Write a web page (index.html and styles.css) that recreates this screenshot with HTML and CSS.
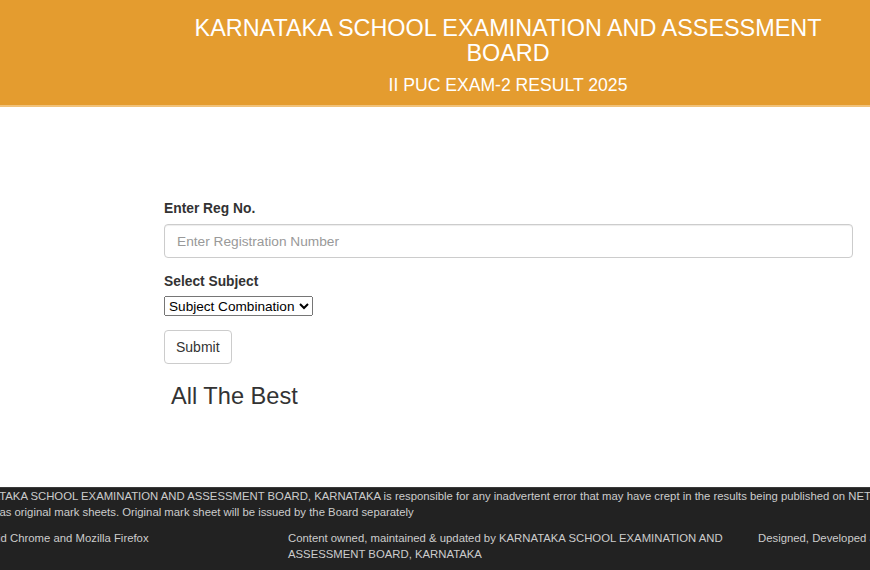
FILE: index.html
```html
<!DOCTYPE html>
<html lang="en">
<head>
<meta charset="utf-8">
<title>KSEAB II PUC Exam-2 Result 2025</title>
<link rel="stylesheet" href="styles.css">
</head>
<body>
<div class="page">
  <header class="site-header">
    <h1 class="title">KARNATAKA SCHOOL EXAMINATION AND ASSESSMENT BOARD</h1>
    <h2 class="subtitle">II PUC EXAM-2 RESULT 2025</h2>
  </header>

  <main class="main">
    <form class="result-form">
      <label class="field-label" for="reg">Enter Reg No.</label>
      <input class="text-input" id="reg" type="text" placeholder="Enter Registration Number">
      <label class="field-label label-subject" for="subj">Select Subject</label>
      <select class="subject-select" id="subj">
        <option>Subject Combination</option>
      </select>
      <div class="actions">
        <button class="btn" type="button">Submit</button>
      </div>
      <h3 class="wish">All The Best</h3>
    </form>
  </main>

  <footer class="site-footer">
    <p class="notice">KARNATAKA SCHOOL EXAMINATION AND ASSESSMENT BOARD, KARNATAKA is responsible for any inadvertent error that may have crept in the results being published on NET. The results published on net are for immediate information to the examinees. These cannot be<br>treated as original mark sheets. Original mark sheet will be issued by the Board separately</p>
    <div class="footer-row">
      <div class="footer-col">Site best viewed in MS Edge, Android Chrome and Mozilla Firefox</div>
      <div class="footer-col">Content owned, maintained &amp; updated by KARNATAKA SCHOOL EXAMINATION AND ASSESSMENT BOARD, KARNATAKA</div>
      <div class="footer-col">Designed, Developed and Hosted by National Informatics Centre</div>
    </div>
  </footer>
</div>
</body>
</html>
```

FILE: styles.css
```css
html, body {
  margin: 0;
  padding: 0;
  overflow: hidden;
  height: 100%;
  background: #fff;
}

body {
  font-family: "Liberation Sans", Arial, sans-serif;
  color: #333;
}

.page {
  width: 1410px;
  margin-left: -197px;
  min-height: 570px;
  display: flex;
  flex-direction: column;
}

.site-header {
  background: #e49c2f;
  border-bottom: 2px solid #f1c27a;
  height: 107px;
  box-sizing: border-box;
  padding-top: 16px;
  text-align: center;
  color: #fff;
}

.title {
  margin: 0 auto;
  max-width: 660px;
  font-size: 23.4px;
  line-height: 25px;
  font-weight: normal;
}

.subtitle {
  margin: 9px 0 0;
  font-size: 17.6px;
  line-height: 20px;
  font-weight: normal;
}

.main {
  flex: 1;
  padding-left: 361px;
  padding-top: 92px;
}

.result-form {
  width: 689px;
  display: flex;
  flex-direction: column;
  align-items: flex-start;
}

.field-label {
  font-size: 13.8px;
  font-weight: bold;
  line-height: 20px;
  margin-bottom: 5px;
  color: #333;
}

.label-subject {
  margin-top: 14px;
  margin-bottom: 4px;
}

.text-input {
  box-sizing: border-box;
  width: 100%;
  height: 34px;
  padding: 6px 12px;
  font-family: "Liberation Sans", Arial, sans-serif;
  font-size: 13.7px;
  color: #555;
  border: 1px solid #ccc;
  border-radius: 4px;
  box-shadow: inset 0 1px 1px rgba(0,0,0,0.075);
  margin: 0;
}

.text-input::placeholder {
  color: #999;
}

.subject-select {
  font-family: "Liberation Sans", Arial, sans-serif;
  font-size: 13.6px;
  width: 149px;
  height: 20px;
  margin: 0;
}

.actions {
  margin-top: 14px;
}

.btn {
  font-family: "Liberation Sans", Arial, sans-serif;
  font-size: 14px;
  color: #333;
  background: #fff;
  border: 1px solid #ccc;
  border-radius: 4px;
  padding: 6px 11px;
  height: 34px;
  line-height: 20px;
}

.wish {
  margin: 19px 0 0 7px;
  font-size: 23.6px;
  line-height: 26px;
  font-weight: normal;
  color: #333;
}

.site-footer {
  background: #222;
  border-top: 1px solid #3a3a3a;
  height: 83px;
  box-sizing: border-box;
  color: #ccc;
  font-size: 11.34px;
  line-height: 16px;
}

.notice {
  margin: 0;
  padding-left: 158px;
  white-space: nowrap;
}

.footer-row {
  display: grid;
  grid-template-columns: repeat(3, 1fr);
  margin-top: 10px;
}

.footer-col {
  padding: 0 15px;
  min-width: 0;
}
```
